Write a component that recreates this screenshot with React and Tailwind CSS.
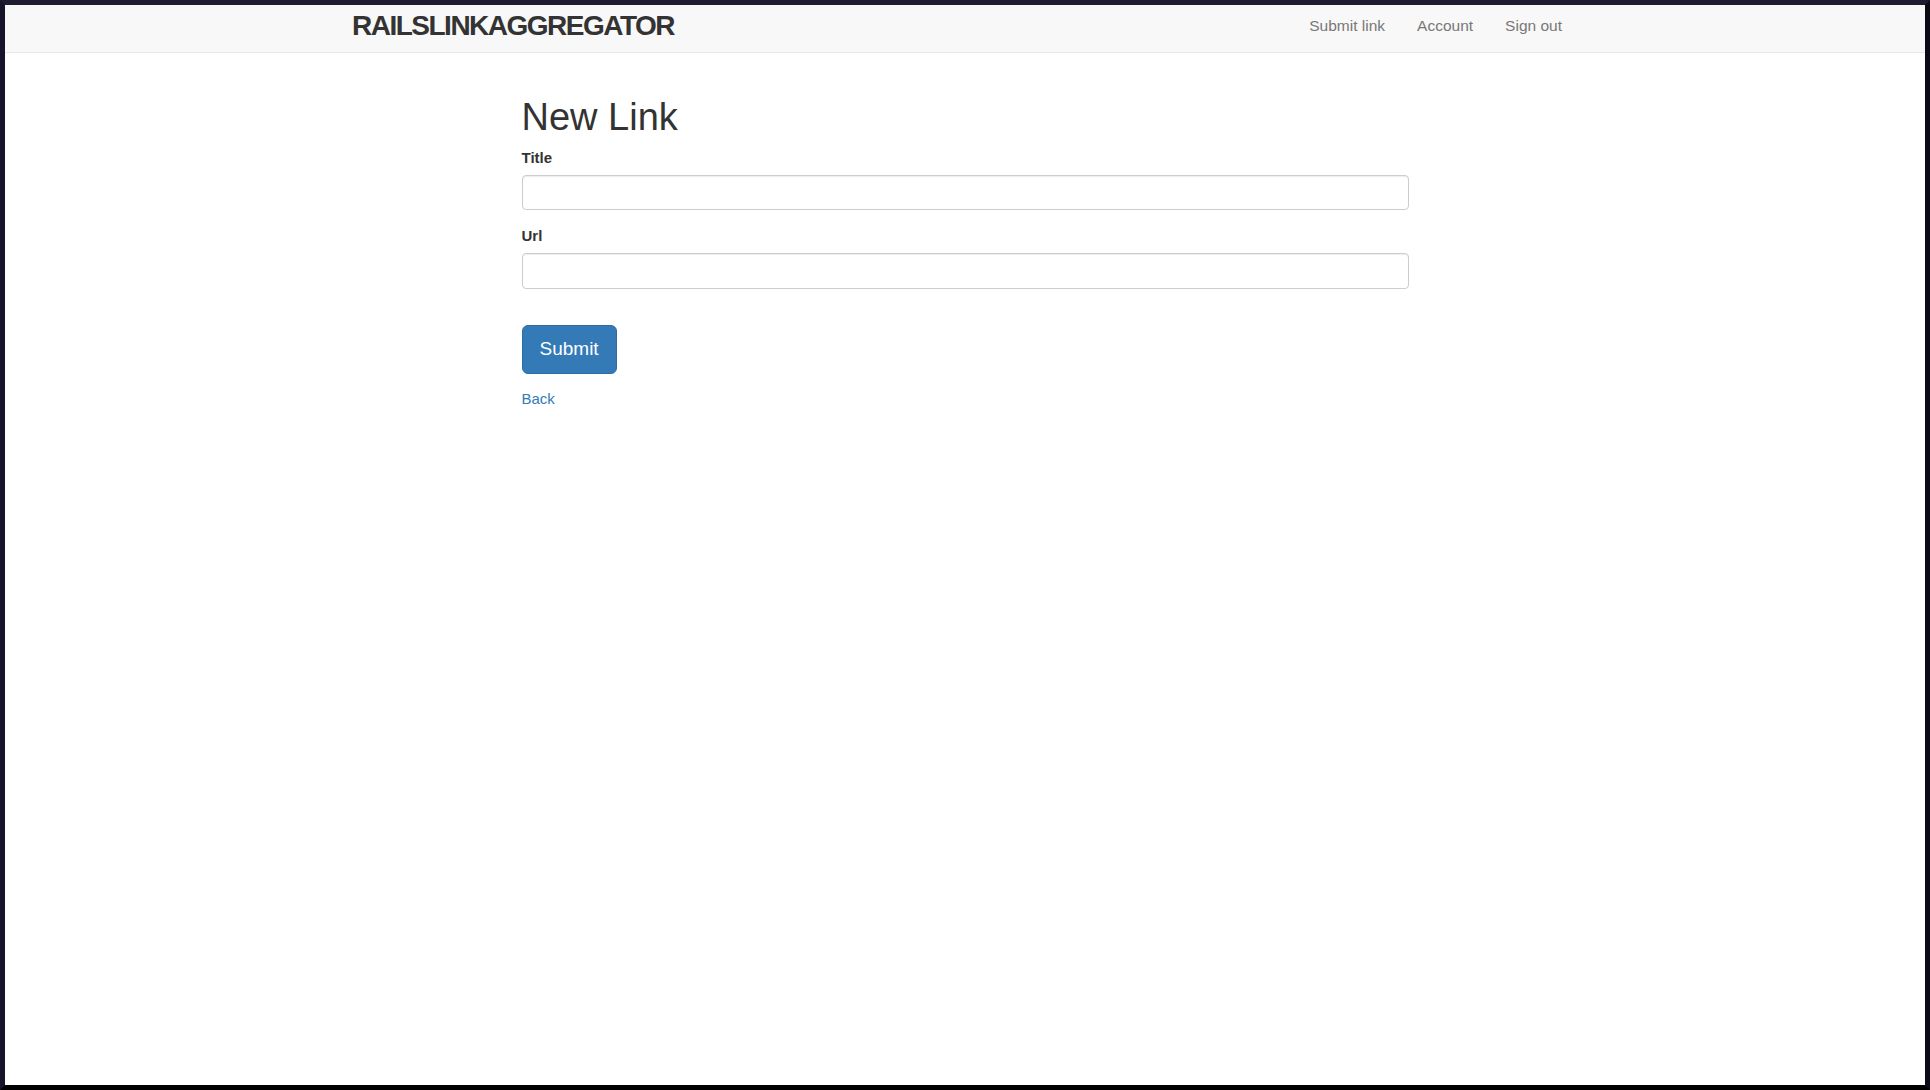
export default function App() {
  const font = "font-['Liberation_Sans',Arial,sans-serif]";

  return (
    <div
      className={`${font} min-h-[1090px] w-full flex flex-col bg-white border-t-[5px] border-l-[5px] border-r-[5px] border-b-[5px] border-t-[#1e1c30] border-l-[#15142a] border-r-[#0b0a15] border-b-black text-[#333]`}
    >
      {/* Navbar */}
      <nav className="h-[48px] bg-[#f8f8f8] border-b border-[#e7e7e7] flex items-center justify-between pl-[347px] pr-[363px]">
        <a
          href="#"
          className="text-[28px] font-bold tracking-[-1.5px] text-[#333] leading-none -mt-[6px]"
        >
          RAILSLINKAGGREGATOR
        </a>
        <ul className="flex items-center gap-[32px] text-[15.5px] text-[#777] -mt-[6px]">
          <li>
            <a href="#">Submit link</a>
          </li>
          <li>
            <a href="#">Account</a>
          </li>
          <li>
            <a href="#">Sign out</a>
          </li>
        </ul>
      </nav>

      {/* Form */}
      <main className="w-[887px] mx-auto pt-[43px]">
        <h1 className="text-[38px] leading-[42px] font-normal">New Link</h1>

        <form className="mt-[9px]" onSubmit={(e) => e.preventDefault()}>
          <div>
            <label className="block text-[15px] leading-[21px] font-bold mb-[7px]">
              Title
            </label>
            <input
              type="text"
              className="block w-full h-[35px] rounded-[4px] border border-[#ccc] bg-white px-3 shadow-[inset_0_1px_1px_rgba(0,0,0,0.075)] outline-none"
            />
          </div>

          <div className="mt-[15px]">
            <label className="block text-[15px] leading-[21px] font-bold mb-[7px]">
              Url
            </label>
            <input
              type="text"
              className="block w-full h-[36px] rounded-[4px] border border-[#ccc] bg-white px-3 shadow-[inset_0_1px_1px_rgba(0,0,0,0.075)] outline-none"
            />
          </div>

          <button
            type="submit"
            className="mt-[36px] h-[49px] px-[17px] rounded-[6px] bg-[#337ab7] border border-[#2e6da4] text-white text-[19px]"
          >
            Submit
          </button>
        </form>

        <a href="#" className="block mt-[14px] text-[15px] leading-[21px] text-[#337ab7]">
          Back
        </a>
      </main>
    </div>
  );
}
